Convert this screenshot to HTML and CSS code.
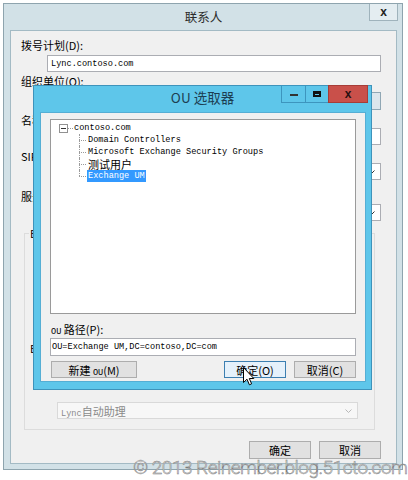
FILE: index.html
```html
<!DOCTYPE html>
<html lang="zh-CN">
<head>
  <meta charset="UTF-8">
  <title>联系人 - OU 选取器</title>
  <link rel="stylesheet" href="styles.css">
</head>
<body>

  <div class="window">
    <div class="titlebar">
      <span></span>
      <span class="title">联系人</span>
      <span class="close-btn">x</span>
    </div>

    <div class="client">
      <div class="label">拨号计划(D):</div>
      <div class="field mono">Lync.contoso.com</div>

      <div class="label l2">组织单位(O):</div>
      <div class="row r2">
        <div class="field grow mono">OU=Exchange UM,DC=contoso,DC=com</div>
        <div class="btn browse">浏览(B)...</div>
      </div>

      <div class="label l3">名称(N):</div>
      <div class="field f3"></div>

      <div class="label l4">SIP URI(S):</div>
      <div class="field combo c4">
        <span class="grow"></span>
        <svg class="arrow" width="7" height="4" viewBox="0 0 7 4"><path d="M0.5 0.5 L3.5 3.5 L6.5 0.5" fill="none" stroke="#333"/></svg>
      </div>

      <div class="label l5">服务器(V):</div>
      <div class="field combo c5">
        <span class="grow"></span>
        <svg class="arrow" width="7" height="4" viewBox="0 0 7 4"><path d="M0.5 0.5 L3.5 3.5 L6.5 0.5" fill="none" stroke="#333"/></svg>
      </div>

      <fieldset class="group">
        <legend>Exchange UM 设置</legend>
        <div class="label inner-label">Exchange UM 自动助理(A):</div>
        <div class="field combo disabled">
          <span class="grow"><span class="mono">Lync</span>自动助理</span>
          <svg class="arrow" width="7" height="4" viewBox="0 0 7 4"><path d="M0.5 0.5 L3.5 3.5 L6.5 0.5" fill="none" stroke="#b8b8b8"/></svg>
        </div>
      </fieldset>

      <div class="actions">
        <div class="btn">确定</div>
        <div class="btn">取消</div>
      </div>
    </div>
  </div>

  <!-- OU 选取器 -->
  <div class="ou-dialog">
    <div class="titlebar ou-title">
      <span></span>
      <span class="title">OU 选取器</span>
      <span class="controls">
        <span class="ctl min"><i></i></span>
        <span class="ctl max"><i></i></span>
        <span class="ctl cls">x</span>
      </span>
    </div>

    <div class="ou-client">
      <div class="tree">
        <div class="tree-root">
          <svg class="expander" width="9" height="9" viewBox="0 0 9 9">
            <rect x="0.5" y="0.5" width="8" height="8" fill="#fff" stroke="#919191"/>
            <line x1="2" y1="4.5" x2="7" y2="4.5" stroke="#333"/>
          </svg>
          <span class="dots"></span>
          <span class="mono">contoso.com</span>
        </div>
        <ul class="children">
          <li class="mono">Domain Controllers</li>
          <li class="mono">Microsoft Exchange Security Groups</li>
          <li><span class="cn">测试用户</span></li>
          <li class="mono"><span class="selected">Exchange UM</span></li>
        </ul>
      </div>

      <div class="label ou-label"><span class="mono">OU</span> 路径(P):</div>
      <div class="field ou-path mono">OU=Exchange UM,DC=contoso,DC=com</div>

      <div class="row ou-actions">
        <div class="btn new-ou"><span>新建 <span class="mono">OU</span>(M)</span></div>
        <span class="grow"></span>
        <div class="btn hover">确定(O)</div>
        <div class="btn">取消(C)</div>
      </div>
    </div>
  </div>

  <svg class="cursor" width="12" height="19" viewBox="0 0 12 19">
    <path d="M0.5 0.5 L0.5 15.5 L4 12.2 L6.4 17.8 L8.6 16.8 L6.3 11.5 L10.8 11.5 Z" fill="#fff" stroke="#000" stroke-width="1"/>
  </svg>

  <div class="watermark">© 2013 Reinember.blog.51cto.com</div>

</body>
</html>
```

FILE: styles.css
```css
body {
  margin: 0;
  background: #ffffff;
  font-family: "Noto Sans CJK SC", sans-serif;
  font-size: 11px;
  color: #000;
  position: relative;
  width: 408px;
  height: 480px;
  overflow: hidden;
}

.mono {
  font-family: "Liberation Mono", monospace;
  font-size: 8.6px;
}

.grow {
  flex: 1;
}

/* main window */
.window {
  margin: 3px;
  width: 400px;
  height: 467px;
  box-sizing: border-box;
  border: 1px solid #8ea4ae;
  background: #d2e1e7;
  padding: 0 5px 5px 6px;
  display: flex;
  flex-direction: column;
}

.titlebar {
  height: 26px;
  display: grid;
  grid-template-columns: 1fr auto 1fr;
  align-items: center;
}

.title {
  font-size: 12.5px;
  color: #2b2b2b;
  padding-bottom: 2px;
}

.close-btn {
  justify-self: end;
  align-self: start;
  width: 29px;
  height: 17px;
  margin-right: -1px;
  box-sizing: border-box;
  border: 1px solid #9fb3bc;
  border-top: none;
  background: #e4edf1;
  font: bold 12px "Liberation Sans", sans-serif;
  color: #222;
  display: flex;
  align-items: center;
  justify-content: center;
}

.client {
  flex: 1;
  border: 1px solid #a3bac4;
  background: #f0f0f0;
  padding: 7px 15px 0 10px;
  display: flex;
  flex-direction: column;
}

.label {
  line-height: 14px;
  height: 14px;
  white-space: nowrap;
}

.field {
  margin-left: 26px;
  height: 17px;
  box-sizing: border-box;
  border: 1px solid #abadb3;
  background: #fff;
  display: flex;
  align-items: center;
  padding: 0 3px;
  white-space: nowrap;
  overflow: hidden;
}

.field.mono {
  margin-top: 3px;
}

.l2 { margin-top: 2px; }
.l3 { margin-top: 3px; }
.l4 { margin-top: 4px; }
.l5 { margin-top: 9px; }

.row {
  display: flex;
  align-items: center;
}

.r2 {
  margin-top: 4px;
  margin-left: 26px;
  gap: 6px;
}

.r2 .field {
  margin: 0;
  height: 18px;
}

.btn {
  height: 18px;
  box-sizing: border-box;
  border: 1px solid #adadad;
  background: #e1e1e1;
  display: flex;
  align-items: center;
  justify-content: center;
  white-space: nowrap;
  font-size: 11px;
}

.browse {
  width: 70px;
  border-color: #90a7b4;
  background: #dde6ec;
}

.f3 { margin-top: 1px; }
.c5 { margin-top: 1px; }

.combo .arrow {
  margin-right: 2px;
  flex: none;
}

.group {
  margin: 5px 6px 0 3px;
  padding: 0 0 10px 0;
  border: 1px solid #dcdcdc;
  min-width: 0;
}

.group legend {
  margin-left: 4px;
  padding: 0 1px;
  line-height: 14px;
}

.inner-label {
  margin: 101px 0 0 5px;
}

.field.disabled {
  margin: 47px 16px 0 32px;
  border-color: #d9d9d9;
  background: #f7f7f7;
  color: #8a8a8a;
}

.actions {
  margin-top: 11px;
  display: flex;
  justify-content: flex-end;
  gap: 8px;
}

.actions .btn {
  width: 62px;
}

/* OU dialog */
.ou-dialog {
  position: absolute;
  left: 33px;
  top: 85px;
  width: 339px;
  height: 305px;
  box-sizing: border-box;
  border: 1px solid #3e93bb;
  background: #5ec6ea;
  display: flex;
  flex-direction: column;
}

.ou-title .title {
  font-size: 13.5px;
  color: #1d3e52;
  padding-bottom: 4px;
}

.controls {
  justify-self: end;
  align-self: start;
  margin-top: -1px;
  margin-right: 3px;
  display: flex;
}

.ctl {
  height: 18px;
  box-sizing: border-box;
  display: flex;
  align-items: center;
  justify-content: center;
}

.min, .max {
  width: 24px;
  border: 1px solid #3d95be;
  border-right: none;
}

.max {
  width: 23px;
}

.min i {
  width: 8px;
  height: 2px;
  background: #333;
  margin-top: 2px;
}

.max i {
  width: 8px;
  height: 6px;
  box-sizing: border-box;
  border: 2px solid #111;
  border-top-width: 3px;
}

.cls {
  width: 40px;
  background: #c9504a;
  border: 1px solid #a63d38;
  font: bold 12px "Liberation Sans", sans-serif;
  color: #2a1111;
}

.ou-client {
  flex: 1;
  margin: 0 5px 7px 6px;
  background: #f0f0f0;
  border: 1px solid #55aed4;
  padding: 6px 9px 0 9px;
  display: flex;
  flex-direction: column;
}

.tree {
  height: 195px;
  box-sizing: border-box;
  border: 1px solid #9a9a9a;
  background: #fff;
  padding: 2px 0 0 8px;
}

.tree-root {
  height: 12px;
  display: flex;
  align-items: center;
}

.dots {
  width: 5px;
  border-top: 1px dotted #9a9a9a;
  margin-right: 1px;
}

.children {
  list-style: none;
  margin: 0;
  padding: 0;
}

.children li {
  position: relative;
  height: 12px;
  line-height: 12px;
  padding-left: 29px;
  white-space: nowrap;
}

.children li::before {
  content: "";
  position: absolute;
  left: 20px;
  top: 0;
  bottom: 0;
  border-left: 1px dotted #9a9a9a;
}

.children li:last-child::before {
  bottom: 6px;
}

.children li::after {
  content: "";
  position: absolute;
  left: 20px;
  top: 6px;
  width: 7px;
  border-top: 1px dotted #9a9a9a;
}

.cn {
  font-size: 11px;
}

.selected {
  display: inline-block;
  height: 12px;
  margin-left: -1px;
  padding: 0 1px;
  background: #3399ff;
  color: #fff;
}

.ou-label {
  margin-top: 8px;
  padding-left: 1px;
}

.field.ou-path {
  margin: 2px 0 0 0;
  height: 18px;
  padding-left: 1px;
}

.ou-actions {
  margin-top: 5px;
  gap: 8px;
  padding-left: 1px;
}

.ou-actions .btn {
  height: 17px;
  width: 62px;
}

.ou-actions .new-ou {
  width: 86px;
}

.btn.hover {
  background: #e5f1fb;
  border-color: #3c7fb1;
}

.cursor {
  position: absolute;
  left: 243px;
  top: 367px;
}

.watermark {
  position: absolute;
  left: 133px;
  top: 456px;
  font-family: Roboto, sans-serif;
  font-weight: 300;
  font-size: 19px;
  letter-spacing: -0.5px;
  color: #ececec;
  -webkit-text-stroke: 0.5px #7c7c7c;
  white-space: nowrap;
}
```
